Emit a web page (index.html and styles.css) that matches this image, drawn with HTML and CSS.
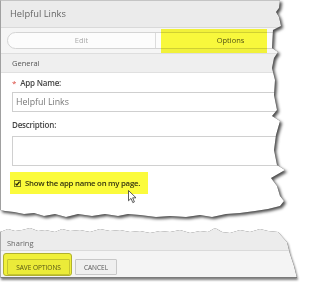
FILE: index.html
```html
<!DOCTYPE html>
<html>
<head>
<meta charset="utf-8">
<link rel="stylesheet" href="styles.css">
</head>
<body>
<div class="page">
  <div class="top-wrap">
    <div class="top-sheet">
      <div class="title-bar">Helpful Links</div>
      <div class="tab-area">
        <div class="tabs">
          <div class="tab">Edit</div>
          <div class="tab active">Options</div>
        </div>
        <span class="hl hl-tab"></span>
      </div>
      <div class="section-head">General</div>
      <div class="form">
        <div class="label"><span class="req">*</span>App Name:</div>
        <div class="input">Helpful Links</div>
        <div class="label desc">Description:</div>
        <div class="textarea"></div>
        <div class="check-row">
          <svg class="checkbox" width="7" height="7" viewBox="0 0 7 7"><rect x="0.5" y="0.5" width="6" height="6" fill="#fff" stroke="#777"/><path d="M1.5 3.6 L2.9 5 L5.6 1.6" fill="none" stroke="#222" stroke-width="1.3"/></svg>
          <span class="check-text">Show the app name on my page.</span>
          <span class="hl hl-check"></span>
        </div>
        <svg class="cursor" width="9" height="14" viewBox="0 0 9 14"><path d="M0.5 0.5 L0.5 10.8 L3 8.4 L4.8 12.6 L6.4 11.9 L4.7 7.8 L8 7.8 Z" fill="#fff" stroke="#333" stroke-width="0.8" stroke-linejoin="round"/></svg>
      </div>
    </div>
  </div>
  <div class="bottom-wrap">
    <div class="bottom-sheet">
      <div class="sharing">Sharing</div>
      <div class="button-bar">
        <button class="btn save">SAVE OPTIONS</button>
        <button class="btn cancel">CANCEL</button>
        <span class="hl hl-btn"></span>
      </div>
    </div>
  </div>
</div>
</body>
</html>
```
FILE: styles.css
```css
body {
  margin: 0;
  background: #fff;
  font-family: "Open Sans", "Noto Sans", sans-serif;
}

.page {
  width: 300px;
  height: 287px;
  overflow: hidden;
}

.top-wrap {
  height: 222px;
  filter: drop-shadow(0 0 0.4px rgba(0, 0, 0, 0.6)) drop-shadow(2px 2.5px 1.8px rgba(0, 0, 0, 0.7));
}

.top-sheet {
  width: 300px;
  height: 222px;
  box-sizing: border-box;
  background: #fff;
  border-left: 1px solid #a0a0a0;
  border-top: 1px solid #c4c4c4;
  overflow: hidden;
  clip-path: polygon(0 0, 280px 0, 279px 8px, 276px 12px, 279px 17px, 281px 26px, 273px 30px, 272px 48px, 278px 52px, 274px 58px, 272px 68px, 275px 80px, 274px 95px, 277px 110px, 272px 116px, 280px 121px, 276px 135px, 274px 150px, 277px 165px, 285px 170px, 271px 178px, 277px 186px, 280px 196px, 284px 201px, 280px 206px, 268px 209px, 255px 211px, 240px 213px, 226px 214px, 212px 217px, 200px 215px, 186px 217px, 170px 216px, 156px 217px, 140px 215px, 128px 214px, 118px 216px, 105px 214px, 92px 216px, 78px 214px, 66px 217px, 55px 214px, 44px 216px, 34px 213px, 24px 214px, 14px 212px, 5px 211px, 0 210px);
}

.title-bar {
  height: 26px;
  background: #ebebeb;
  border-bottom: 1px solid #d9d9d9;
  padding-left: 9px;
  font-size: 9.3px;
  line-height: 26px;
  color: #666;
}

.tab-area {
  position: relative;
  background: #f5f5f5;
  border-bottom: 1px solid #dedede;
  padding: 4px 0 4px 6px;
}

.tabs {
  display: grid;
  grid-template-columns: 147px 150px;
  height: 17px;
  box-sizing: border-box;
  border: 1px solid #d4d4d4;
  border-radius: 9px;
  background: #fcfcfc;
  font-size: 7.5px;
  line-height: 15px;
  text-align: center;
}

.tab {
  color: #aaa;
}

.tab.active {
  border-left: 1px solid #dcdcdc;
  color: #555;
}

.hl {
  position: absolute;
  background: #fbfb3c;
  mix-blend-mode: multiply;
}

.hl-tab {
  left: 160px;
  top: 1px;
  width: 106px;
  height: 24px;
}

.section-head {
  height: 18px;
  background: #efefef;
  border-bottom: 1px solid #e0e0e0;
  padding-left: 11px;
  font-size: 7.5px;
  line-height: 18px;
  color: #555;
}

.form {
  position: relative;
  padding: 4px 0 0 11px;
}

.label {
  font-size: 8px;
  font-weight: 600;
  line-height: 12px;
  letter-spacing: -0.2px;
  color: #444;
}

.req {
  color: #d9443a;
  font-weight: 400;
  margin-right: 4px;
}

.input {
  margin-top: 3px;
  height: 20px;
  box-sizing: border-box;
  border: 1px solid #cfcfcf;
  padding-left: 3px;
  font-size: 8.8px;
  line-height: 18px;
  color: #777;
}

.desc {
  margin-top: 7px;
}

.textarea {
  margin-top: 5px;
  height: 30px;
  box-sizing: border-box;
  border: 1px solid #d0d0d0;
}

.check-row {
  position: relative;
  margin-top: 6px;
  height: 22px;
  display: flex;
  align-items: center;
  gap: 4px;
  padding-left: 2px;
  font-size: 7.8px;
  font-weight: 600;
  letter-spacing: -0.25px;
  color: #333;
}

.checkbox {
  display: block;
  flex: none;
}

.hl-check {
  left: -2px;
  top: 0;
  width: 138px;
  height: 22px;
}

.cursor {
  position: absolute;
  left: 127px;
  top: 117px;
}

.bottom-wrap {
  margin-top: 4px;
  filter: drop-shadow(0 0 0.5px rgba(0, 0, 0, 0.7)) drop-shadow(1.5px 2px 1px rgba(0, 0, 0, 0.5));
}

.bottom-sheet {
  width: 300px;
  height: 52px;
  box-sizing: border-box;
  border-left: 1px solid #aaa;
  clip-path: polygon(0 6px, 8px 3px, 15px 5px, 22px 4px, 30px 2px, 38px 5px, 45px 4px, 55px 6px, 62px 3px, 70px 5px, 80px 4px, 90px 6px, 100px 3px, 110px 5px, 120px 4px, 130px 6px, 140px 5px, 150px 7px, 160px 5px, 170px 6px, 180px 4px, 190px 7px, 200px 5px, 208px 6px, 215px 2px, 222px 6px, 230px 7px, 240px 4px, 250px 6px, 260px 3px, 268px 5px, 278px 6px, 287px 16px, 290px 28px, 294px 40px, 297px 52px, 0 52px);
}

.sharing {
  height: 13px;
  padding: 11px 0 0 6px;
  background: #ececec;
  border-bottom: 1px solid #dadada;
  font-size: 7.5px;
  line-height: 12px;
  color: #666;
}

.button-bar {
  position: relative;
  height: 27px;
  box-sizing: border-box;
  padding: 8px 0 0 6px;
  display: flex;
  gap: 5px;
  align-items: flex-start;
  background: #f4f4f4;
  border-bottom: 1px solid #7a7a7a;
}

.btn {
  height: 16px;
  padding: 0;
  margin: 0;
  background: #efefef;
  border: 1px solid #c8c8c8;
  border-radius: 1px;
  font-family: "Open Sans", "Noto Sans", sans-serif;
  font-size: 6.5px;
  color: #555;
}

.save {
  width: 63px;
}

.cancel {
  width: 42px;
}

.hl-btn {
  left: 2px;
  top: 2px;
  width: 69px;
  height: 23px;
  box-sizing: border-box;
  border: 1px solid #b9b930;
  border-radius: 3px;
}
```
